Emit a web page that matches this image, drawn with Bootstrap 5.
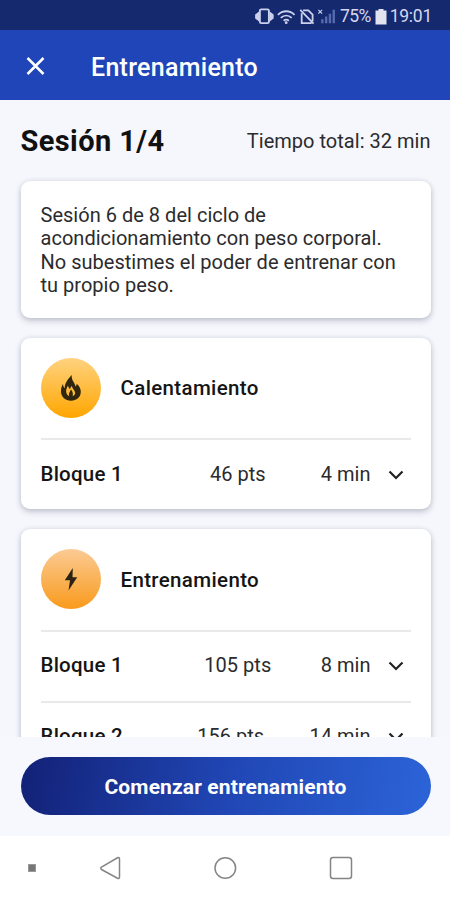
<!DOCTYPE html>
<html lang="es">
<head>
<meta charset="utf-8">
<meta name="viewport" content="width=device-width, initial-scale=1">
<title>Entrenamiento</title>
<link href="https://cdn.jsdelivr.net/npm/bootstrap@5.3.0/dist/css/bootstrap.min.css" rel="stylesheet">
<style>
body{font-family:Roboto,sans-serif;font-size:20px;line-height:23.5px;letter-spacing:.02px;color:#2b2b2d;background:#f6f7fd}
.screen{height:900px}
.status{height:30px;background:#15296f;color:#d3d8ee;font-size:17.500px;letter-spacing:-.25px;padding:3px 18px 0 0}
.percent{margin-left:3px;letter-spacing:-.6px}
.battery{margin:0 3px 0 4px}
.topbar{height:70px;background:#1f45b8;padding:5px 25px 0}
.topbar h1{font-size:25px;font-weight:500;letter-spacing:.28px;margin:0 0 0 45px}
.content{padding:0 19.500px 0 20.500px}
.heading{height:80.500px;padding-top:3px}
.heading h2{font-size:29px;font-weight:700;letter-spacing:.4px;margin:0;color:#111}
.panel{border:0;border-radius:9px;padding:0 20px;margin-bottom:20px;box-shadow:0 3px 6px rgba(30,35,65,.22),0 0 5px rgba(30,35,65,.1)}
.intro{height:137.500px;padding-top:23px;margin-bottom:19.500px}
.section-title{height:100.500px;gap:20px}
.section-title h3,.block-name{font-size:20.500px;font-weight:500;letter-spacing:.35px;margin:0;color:#151515}
.block-name{letter-spacing:.22px}
.section-title h3{padding-top:2px}
.disc{width:60px;height:60px}
.warm{background:linear-gradient(#ffd27f,#ffa600)}
.work{background:linear-gradient(#fbcb94,#f99a1c)}
.block-row{height:71px;border-top:2px solid #e8e9eb;padding-right:7px}
.points{padding-left:32px}
.block-row+.block-row .points{padding-left:29px}
.chevron{margin-left:17px}
.bottom{height:99px;background:#f6f8fe;padding:0 19.500px 1px 20.500px}
.start{height:58px;color:#fff!important;font-size:21px;font-weight:700;letter-spacing:.12px;padding-top:9px;background:linear-gradient(100deg,#13237a 3%,#2046b4 50%,#2b62d6 97%);border:0}
.android{height:64px}
.android svg{display:block}
</style>
<script src="https://cdn.jsdelivr.net/npm/bootstrap@5.3.0/dist/js/bootstrap.bundle.min.js"></script>
</head>
<body>
<div class="screen d-flex flex-column overflow-hidden">
  <div class="status d-flex align-items-center justify-content-end flex-shrink-0">
    <svg width="83" height="19" viewBox="0 0 86 20" fill="none" stroke="#cbd1ec">
      <rect x="5.500" y="2.500" width="9.500" height="14.500" rx="1.500" stroke-width="2"/>
      <path d="M5 4.500L.5 8v4L5 15.500zM15.500 4.500L20 8v4l-4.500 3.500z" fill="#cbd1ec" stroke="none"/>
      <path d="M24.500 8.200c5-5 12.500-5 17.500 0M27.500 11.500c3.500-3.300 8-3.300 11.500 0M30.500 14.500c2-1.600 3.700-1.600 5.500 0" stroke-width="1.900"/>
      <circle cx="33.200" cy="16.500" r="1.500" fill="#cbd1ec" stroke="none"/>
      <path d="M51 3.500h5.500l4.500 4.500v7M60 17h-10.500V6.500M48 3l14 14.500" stroke-width="1.900"/>
      <path d="M67 3l4 4M71 3l-4 4" stroke-width="1.200"/>
      <path d="M70 13h2.500v4H70zM74 10h2.500v7H74zM78 7h2.500v10H78zM82 3h2.500v14H82z" fill="#566bb0" stroke="none"/>
    </svg>
    <span class="percent">75%</span>
    <svg class="battery" width="12" height="17" viewBox="0 0 12 17" fill="#e1e3ee"><path d="M3.500 1h5v1.500H11.500v14H.5v-14h3z"/></svg>
    <span>19:01</span>
  </div>
  <header class="topbar d-flex align-items-center flex-shrink-0 text-white">
    <svg width="21" height="21" viewBox="0 0 21 21" fill="none" stroke="#fff" stroke-width="2.500"><path d="M2.500 1l16 16M18.500 1l-16 16"/></svg>
    <h1>Entrenamiento</h1>
  </header>
  <main class="content flex-grow-1 overflow-hidden">
    <div class="heading d-flex align-items-center justify-content-between">
      <h2>Sesión 1/4</h2><span>Tiempo total: 32 min</span>
    </div>
    <div class="card panel intro">
      <p class="m-0">Sesión 6 de 8 del ciclo de<br>acondicionamiento con peso corporal.<br>No subestimes el poder de entrenar con<br>tu propio peso.</p>
    </div>
    <section class="card panel">
      <div class="section-title d-flex align-items-center">
        <div class="disc warm rounded-circle d-flex align-items-center justify-content-center">
          <svg width="22" height="28" viewBox="0 0 22 28"><path fill="#30270e" fill-rule="evenodd" d="M11.800 1C11 6.500 15 8.500 15.500 12.500c.8-.7 1.200-1.500 1.300-2.700 2.500 2.200 4 5 4 8 0 5.500-4.300 8.900-9.800 8.900S1 23 1 17.500c0-3 .5-5.300 2-7.500.2 2 .6 3.300 1.700 4.300C4.700 9 8 5 11.800 1zM8 11.500c-1.500 2.800-2.200 5-1.700 7 .4 1.800 1.300 3 2.900 3.800-1-2.800.6-4.300 1.800-6.800 1.300 1.700 2.300 3.700 1.700 6.800 2-.8 2.800-2.300 2.300-4.300-.4-1.700-2.700-3.500-3.200-6-1 .9-1.500 1.900-1.700 3.200-1.100-.9-1.900-2.100-2.100-3.700z"/></svg>
        </div>
        <h3>Calentamiento</h3>
      </div>
      <div class="block-row d-flex align-items-center">
        <span class="block-name">Bloque 1</span><span class="points flex-grow-1 text-center">46 pts</span><span>4 min</span>
        <svg class="chevron" width="16" height="10" viewBox="0 0 16 10" fill="none" stroke="#222" stroke-width="2.200"><path d="M1.500 1.500L8 8l6.500-6.500"/></svg>
      </div>
    </section>
    <section class="card panel">
      <div class="section-title d-flex align-items-center">
        <div class="disc work rounded-circle d-flex align-items-center justify-content-center">
          <svg width="14" height="24" viewBox="0 0 14 24"><path fill="#2d2113" d="M8.800 1L.8 13.200H6L4.500 23.500l8.700-13.200H8.500z"/></svg>
        </div>
        <h3>Entrenamiento</h3>
      </div>
      <div class="block-row d-flex align-items-center">
        <span class="block-name">Bloque 1</span><span class="points flex-grow-1 text-center">105 pts</span><span>8 min</span>
        <svg class="chevron" width="16" height="10" viewBox="0 0 16 10" fill="none" stroke="#222" stroke-width="2.200"><path d="M1.500 1.500L8 8l6.500-6.500"/></svg>
      </div>
      <div class="block-row d-flex align-items-center">
        <span class="block-name">Bloque 2</span><span class="points flex-grow-1 text-center">156 pts</span><span>14 min</span>
        <svg class="chevron" width="16" height="10" viewBox="0 0 16 10" fill="none" stroke="#222" stroke-width="2.200"><path d="M1.500 1.500L8 8l6.500-6.500"/></svg>
      </div>
    </section>
  </main>
  <div class="bottom d-flex align-items-center flex-shrink-0">
    <button class="btn start rounded-pill w-100" type="button">Comenzar entrenamiento</button>
  </div>
  <nav class="android bg-white flex-shrink-0" aria-label="Sistema">
    <svg width="450" height="64" viewBox="0 0 450 64" fill="none" stroke="#858585" stroke-width="1.500">
      <rect x="28.500" y="28.500" width="7" height="7" fill="#777" stroke="#999" stroke-width="1"/>
      <path d="M117.500 21.800Q119.500 21 119.500 23v18q0 2-2 1.200L101.500 33.500q-1.500-1.200 0-2.400z"/>
      <circle cx="225.300" cy="32" r="10.300"/>
      <rect x="330.500" y="21.500" width="21" height="21" rx="2.500"/>
    </svg>
  </nav>
</div>
</body>
</html>
